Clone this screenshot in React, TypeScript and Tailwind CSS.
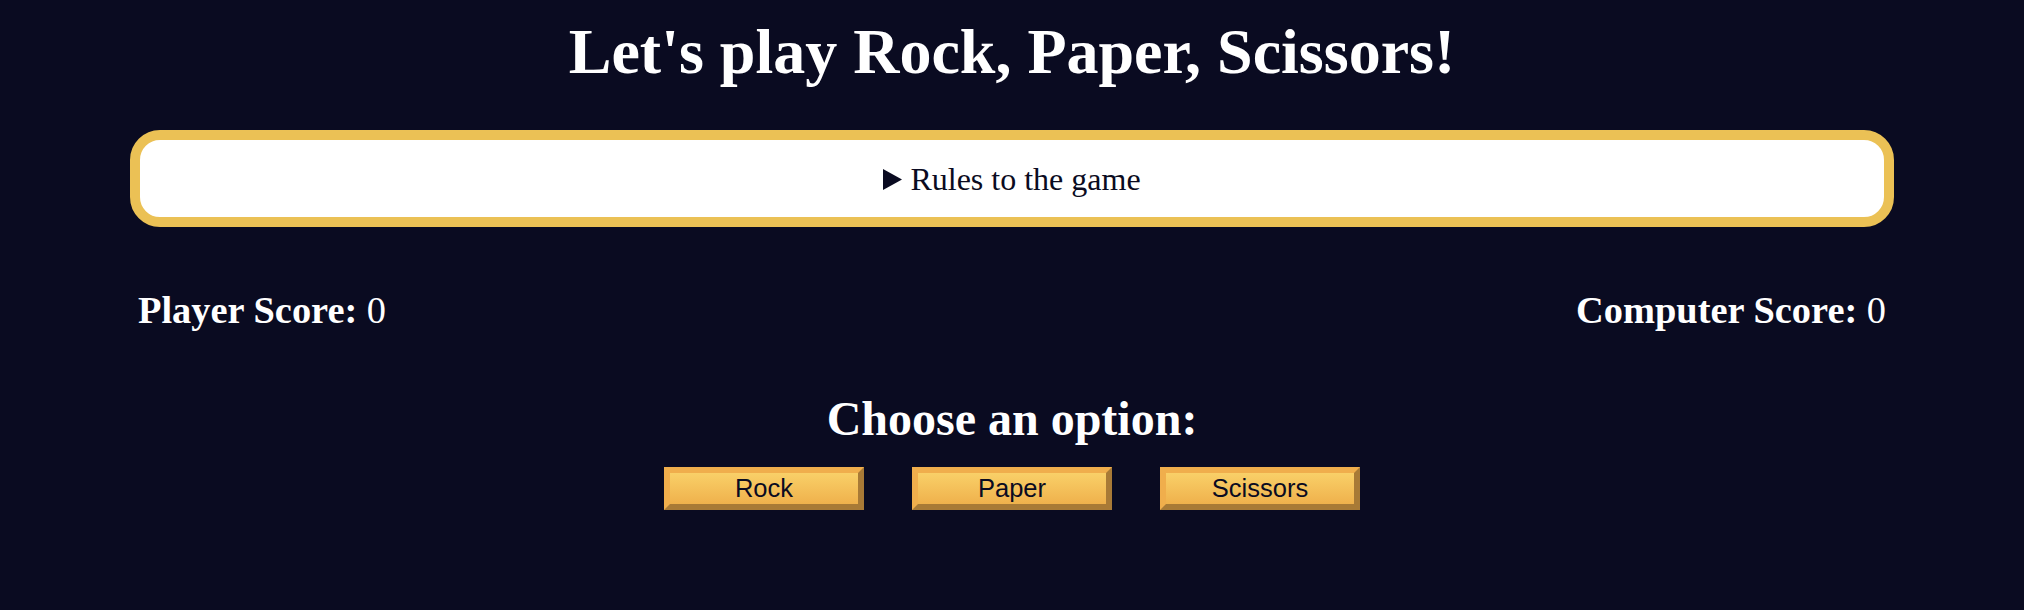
export default function App() {
  const options = ['Rock', 'Paper', 'Scissors'];

  return (
    <div className="min-h-screen bg-[#0a0b21] px-[130px] pt-[15px] font-['Liberation_Serif',serif] text-white">
      <h1 className="text-center text-[64px] font-bold leading-[74px]">Let's play Rock, Paper, Scissors!</h1>

      <details className="mt-[41px] rounded-[30px] border-[10px] border-[#ebc155] bg-white text-[#0a0b21]">
        <summary className="flex h-[77px] cursor-pointer list-none items-center justify-center text-[32px] [&::-webkit-details-marker]:hidden">
          <svg width="19" height="21" viewBox="0 0 19 21" className="mr-[8px] mt-[1px]">
            <path d="M0 0 L19 10.5 L0 21 Z" fill="#0a0b21" />
          </svg>
          <span>Rules to the game</span>
        </summary>
      </details>

      <div className="mt-[62px] flex justify-between px-2 text-[38.4px] leading-[43px]">
        <h3>
          <span className="font-bold">Player Score:</span> 0
        </h3>
        <h3>
          <span className="font-bold">Computer Score:</span> 0
        </h3>
      </div>

      <h2 className="mt-[59px] text-center text-[48px] font-bold leading-[55px]">Choose an option:</h2>

      <div className="mt-[21px] flex justify-center gap-[48px]">
        {options.map((opt) => (
          <button
            key={opt}
            type="button"
            className="h-[43px] w-[200px] border-[6px] border-t-[#f0ae4c] border-l-[#f0ae4c] border-b-[#a87a36] border-r-[#a87a36] bg-linear-to-b from-[#f9d068] to-[#efb14c] font-['Liberation_Sans',sans-serif] text-[25.5px] leading-none text-[#0a0b21]"
          >
            {opt}
          </button>
        ))}
      </div>
    </div>
  );
}
